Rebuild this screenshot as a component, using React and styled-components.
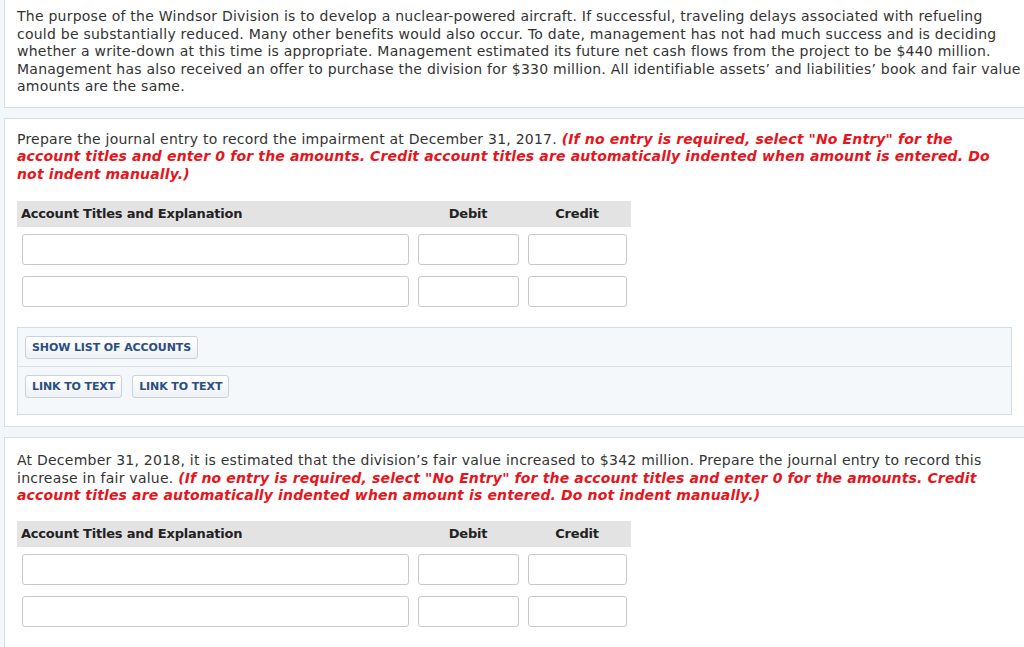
import React from 'react';
import styled, { createGlobalStyle } from 'styled-components';

const GlobalStyle = createGlobalStyle`
  html, body { margin: 0; padding: 0; background: #f4f7fa; }
  body { font-family: Verdana, "DejaVu Sans", sans-serif; color: #333; }
`;

const Page = styled.div`
  overflow: hidden;
  padding-left: 4px;
  height: 647px;
`;

const Panel = styled.section`
  background: #fff;
  border: 1px solid #d6dee7;
  border-top: ${p => (p.first ? 'none' : '1px solid #d6dee7')};
  margin-right: -1px;
  margin-bottom: 10px;
  padding: ${p => p.pad || '12px 12px 13px 12px'};
`;

const Text = styled.p`
  margin: 0;
  font-size: 14px;
  letter-spacing: 0.24px;
  line-height: 17.5px;
`;

const Note = styled.span`
  color: #e8141b;
  font-weight: bold;
  font-style: italic;
  letter-spacing: 0.15px;
`;

const Table = styled.div`
  width: 614px;
  margin-top: ${p => p.top || 18}px;
  display: grid;
  grid-template-columns: 396px 110px 108px;
`;

const HeadCell = styled.div`
  background: #e3e3e3;
  height: 26px;
  line-height: 26px;
  font-size: 13px;
  letter-spacing: -0.2px;
  font-weight: bold;
  color: #222;
  text-align: ${p => (p.center ? 'center' : 'left')};
  padding-left: ${p => (p.center ? 0 : 4)}px;
`;

const Cell = styled.div`
  padding: ${p => (p.firstRow ? '7px' : '11px')} 4px 0 5px;
`;

const Field = styled.input`
  display: block;
  box-sizing: border-box;
  width: 100%;
  height: 31px;
  border: 1px solid #c9c9c9;
  border-radius: 3px;
  background: #fff;
  outline: none;
`;

const ButtonBox = styled.div`
  margin-top: 20px;
  border: 1px solid #d3dbe4;
  background: #f5f8fb;
`;

const ButtonRow = styled.div`
  display: flex;
  gap: 10px;
  padding: 8px 7px ${p => p.bottom || 7}px 7px;
  border-top: ${p => (p.divided ? '1px solid #d8e0e8' : 'none')};
`;

const Btn = styled.button`
  height: 23px;
  padding: 0 6px;
  font-family: Verdana, "DejaVu Sans", sans-serif;
  font-size: 11px;
  font-weight: bold;
  color: #2b4e80;
  background: linear-gradient(#ffffff, #eef1f5);
  border: 1px solid #c9d1db;
  border-radius: 3px;
  letter-spacing: -0.1px;
`;

const Journal = ({ top }) => (
  <Table top={top}>
    <HeadCell>Account Titles and Explanation</HeadCell>
    <HeadCell center>Debit</HeadCell>
    <HeadCell center>Credit</HeadCell>
    {[0, 1].map(r => (
      <React.Fragment key={r}>
        <Cell firstRow={r === 0}><Field /></Cell>
        <Cell firstRow={r === 0}><Field /></Cell>
        <Cell firstRow={r === 0}><Field /></Cell>
      </React.Fragment>
    ))}
  </Table>
);

export default function App() {
  return (
    <Page>
      <GlobalStyle />
      <Panel first pad="8px 3px 11px 12px">
        <Text>
          The purpose of the Windsor Division is to develop a nuclear-powered aircraft. If successful, traveling delays associated with refueling could be substantially reduced. Many other benefits would also occur. To date, management has not had much success and is deciding whether a write-down at this time is appropriate. Management estimated its future net cash flows from the project to be $440 million. Management has also received an offer to purchase the division for $330 million. All identifiable assets’ and liabilities’ book and fair value amounts are the same.
        </Text>
      </Panel>
      <Panel pad="12px 12px 11px 12px">
        <Text>
          Prepare the journal entry to record the impairment at December 31, 2017.{' '}
          <Note>(If no entry is required, select "No Entry" for the account titles and enter 0 for the amounts. Credit account titles are automatically indented when amount is entered. Do not indent manually.)</Note>
        </Text>
        <Journal top={18} />
        <ButtonBox>
          <ButtonRow>
            <Btn>SHOW LIST OF ACCOUNTS</Btn>
          </ButtonRow>
          <ButtonRow divided bottom={16}>
            <Btn>LINK TO TEXT</Btn>
            <Btn>LINK TO TEXT</Btn>
          </ButtonRow>
        </ButtonBox>
      </Panel>
      <Panel pad="14px 12px 20px 12px">
        <Text>
          At December 31, 2018, it is estimated that the division’s fair value increased to $342 million. Prepare the journal entry to record this increase in fair value.{' '}
          <Note>(If no entry is required, select "No Entry" for the account titles and enter 0 for the amounts. Credit account titles are automatically indented when amount is entered. Do not indent manually.)</Note>
        </Text>
        <Journal top={16} />
      </Panel>
    </Page>
  );
}
